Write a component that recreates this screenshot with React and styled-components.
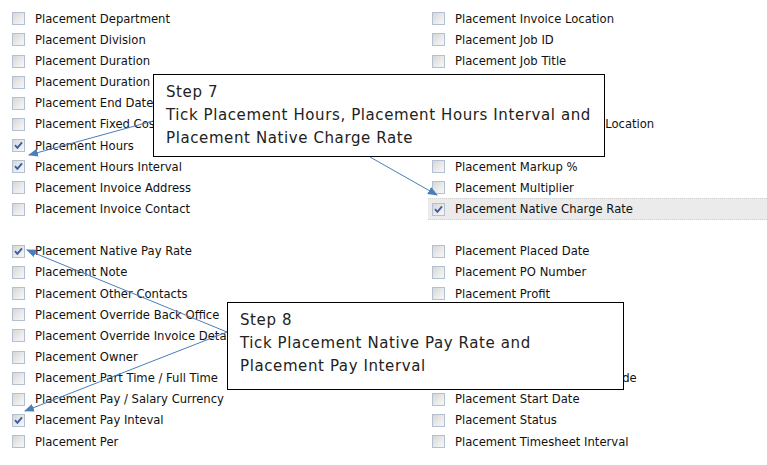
import React from 'react';
import styled, { createGlobalStyle } from 'styled-components';

const GlobalStyle = createGlobalStyle`
  html, body {
    margin: 0;
    padding: 0;
    background: #ffffff;
  }
  body {
    font-family: "DejaVu Sans", Verdana, sans-serif;
  }
`;

const groups = [
  {
    left: [
      { label: 'Placement Department' },
      { label: 'Placement Division' },
      { label: 'Placement Duration' },
      { label: 'Placement Duration Interval' },
      { label: 'Placement End Date' },
      { label: 'Placement Fixed Cost' },
      { label: 'Placement Hours', checked: true },
      { label: 'Placement Hours Interval', checked: true },
      { label: 'Placement Invoice Address' },
      { label: 'Placement Invoice Contact' },
    ],
    right: [
      { label: 'Placement Invoice Location' },
      { label: 'Placement Job ID' },
      { label: 'Placement Job Title' },
      { label: 'Placement Job Title Grade' },
      { label: 'Placement Last Note' },
      { label: 'Placement Main Worksite Location' },
      { label: 'Placement Margin' },
      { label: 'Placement Markup %' },
      { label: 'Placement Multiplier' },
      { label: 'Placement Native Charge Rate', checked: true, selected: true },
    ],
  },
  {
    left: [
      { label: 'Placement Native Pay Rate', checked: true },
      { label: 'Placement Note' },
      { label: 'Placement Other Contacts' },
      { label: 'Placement Override Back Office' },
      { label: 'Placement Override Invoice Details' },
      { label: 'Placement Owner' },
      { label: 'Placement Part Time / Full Time' },
      { label: 'Placement Pay / Salary Currency' },
      { label: 'Placement Pay Inteval', checked: true },
      { label: 'Placement Per' },
    ],
    right: [
      { label: 'Placement Placed Date' },
      { label: 'Placement PO Number' },
      { label: 'Placement Profit' },
      { label: 'Placement Rate' },
      { label: 'Placement Reference' },
      { label: 'Placement Source' },
      { label: 'Placement Rate Schedule Code' },
      { label: 'Placement Start Date' },
      { label: 'Placement Status' },
      { label: 'Placement Timesheet Interval' },
    ],
  },
];

function CheckMark() {
  return (
    <svg width="11" height="11" viewBox="0 0 11 11">
      <path d="M2 5.2 L4.4 7.8 L9 2.4" fill="none" stroke="#3b5da0" strokeWidth="1.9" />
    </svg>
  );
}

function FieldRow({ label, checked, selected }) {
  return (
    <Row selected={selected}>
      <Box>{checked ? <CheckMark /> : null}</Box>
      <Label>{label}</Label>
    </Row>
  );
}

function Arrows() {
  return (
    <Overlay width="767" height="465" viewBox="0 0 767 465">
      <defs>
        <marker id="head" markerWidth="10" markerHeight="8" refX="9" refY="4" orient="auto" markerUnits="userSpaceOnUse">
          <path d="M0 0 L10 4 L0 8 Z" fill="#4a7ebb" />
        </marker>
      </defs>
      <Line x1="153" y1="121" x2="29" y2="155" markerEnd="url(#head)" />
      <Line x1="370" y1="157" x2="437" y2="195" markerEnd="url(#head)" />
      <Line x1="227" y1="332" x2="27" y2="250" markerEnd="url(#head)" />
      <Line x1="227" y1="332" x2="25" y2="411" markerEnd="url(#head)" />
    </Overlay>
  );
}

export default function App() {
  return (
    <>
      <GlobalStyle />
      <Page>
        {groups.map((g, gi) => (
          <Section key={gi}>
            <Column>
              {g.left.map((f) => <FieldRow key={f.label} {...f} />)}
            </Column>
            <Column>
              {g.right.map((f) => <FieldRow key={f.label} {...f} />)}
            </Column>
          </Section>
        ))}

        <Callout top={74} left={153} width={452} height={83}>
          <div>Step 7</div>
          <div>Tick Placement Hours, Placement Hours Interval and</div>
          <div>Placement Native Charge Rate</div>
        </Callout>

        <Callout top={302} left={227} width={397} height={88}>
          <div>Step 8</div>
          <div>Tick Placement Native Pay Rate and</div>
          <div>Placement Pay Interval</div>
        </Callout>

        <Arrows />
      </Page>
    </>
  );
}

const Page = styled.div`
  position: relative;
  width: 767px;
  height: 465px;
  overflow: hidden;
  box-sizing: border-box;
  padding: 8.2px 0 0 8px;
  display: flex;
  flex-direction: column;
  gap: 21.15px;
`;

const Section = styled.div`
  display: grid;
  grid-template-columns: 420px 1fr;
`;

const Column = styled.div`
  display: flex;
  flex-direction: column;
`;

const Row = styled.div`
  height: 21.15px;
  box-sizing: border-box;
  display: flex;
  align-items: center;
  gap: 10px;
  padding-left: 4px;
  white-space: nowrap;
  background: ${(p) => (p.selected ? '#ebebeb' : 'transparent')};
  border-top: 1px dotted ${(p) => (p.selected ? '#cfcfcf' : 'transparent')};
  border-bottom: 1px dotted ${(p) => (p.selected ? '#cfcfcf' : 'transparent')};
`;

const Box = styled.span`
  width: 13px;
  height: 13px;
  box-sizing: border-box;
  flex: none;
  border: 1px solid #b3c0d2;
  background: linear-gradient(135deg, #d6d6d6 0%, #ececec 60%, #f7f7f7 100%);
  display: flex;
  align-items: center;
  justify-content: center;
`;

const Label = styled.span`
  font-family: "DejaVu Sans", Verdana, sans-serif;
  font-size: 11.6px;
  color: #111111;
`;

const Callout = styled.div`
  position: absolute;
  top: ${(p) => p.top}px;
  left: ${(p) => p.left}px;
  width: ${(p) => p.width}px;
  height: ${(p) => p.height}px;
  box-sizing: border-box;
  border: 1px solid #000000;
  background: #ffffff;
  padding: 6px 0 0 12px;
  font-family: "DejaVu Sans", sans-serif;
  font-size: 15px;
  letter-spacing: 0.6px;
  line-height: 23px;
  color: #222222;
  white-space: nowrap;
`;

const Overlay = styled.svg`
  position: absolute;
  top: 0;
  left: 0;
  pointer-events: none;
`;

const Line = styled.line`
  stroke: #4a7ebb;
  stroke-width: 1;
`;
